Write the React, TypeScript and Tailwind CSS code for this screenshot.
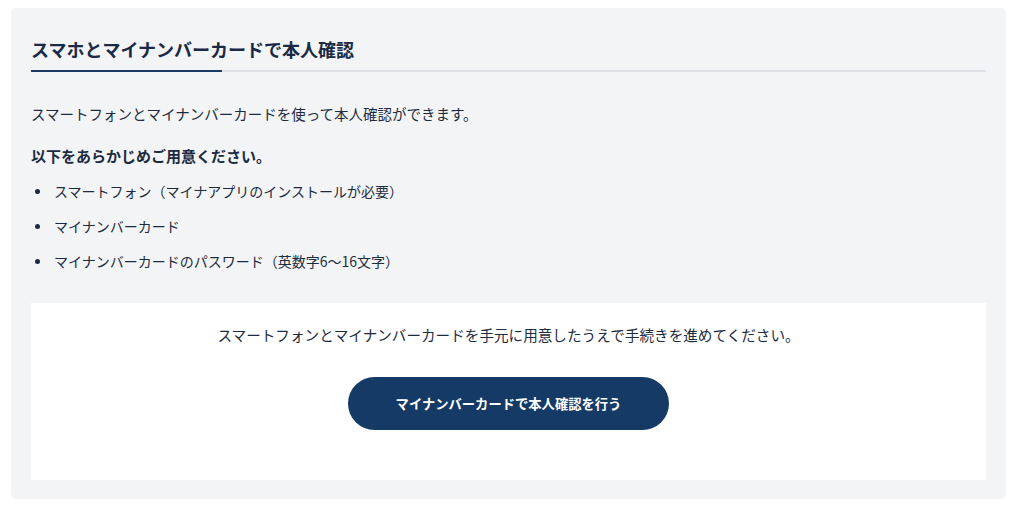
const items = [
  "スマートフォン（マイナアプリのインストールが必要）",
  "マイナンバーカード",
  "マイナンバーカードのパスワード（英数字6～16文字）",
];

export default function App() {
  return (
    <div
      className="min-h-[522px] bg-white pt-[8px] pl-[11px] pr-[12px] text-[#1c2b40]"
      style={{ fontFamily: '"Noto Sans CJK JP", "Noto Sans", sans-serif' }}
    >
      <section className="rounded-[5px] bg-[#f3f4f6] px-[20px] pt-[27px] pb-[19px]">
        <div className="relative border-b-2 border-[#dcdfe4] pb-[7px]">
          <h2 className="text-[18px] font-bold leading-[28px] text-[#1b2a44]">
            スマホとマイナンバーカードで本人確認
          </h2>
          <span className="absolute left-0 -bottom-[2px] h-[2px] w-[191px] bg-[#1b3a62]" />
        </div>

        <p className="mt-[30px] text-[14.5px] leading-[24px]">
          スマートフォンとマイナンバーカードを使って本人確認ができます。
        </p>
        <p className="mt-[18px] text-[15px] font-bold leading-[24px]">
          以下をあらかじめご用意ください。
        </p>

        <ul className="mt-[11px] flex flex-col gap-[11px]">
          {items.map((item) => (
            <li key={item} className="flex items-center text-[14px] leading-[24px]">
              <span className="ml-[4px] mr-[14px] h-[5px] w-[5px] rounded-full bg-[#1c2b40]" />
              {item}
            </li>
          ))}
        </ul>

        <div className="mt-[30px] flex flex-col items-center bg-white pt-[20px] pb-[50px]">
          <p className="text-[14.6px] leading-[24px]">
            スマートフォンとマイナンバーカードを手元に用意したうえで手続きを進めてください。
          </p>
          <button
            type="button"
            className="mt-[30px] h-[53px] w-[321px] rounded-full bg-[#153a66] text-[13.3px] font-bold text-white"
          >
            マイナンバーカードで本人確認を行う
          </button>
        </div>
      </section>
    </div>
  );
}
